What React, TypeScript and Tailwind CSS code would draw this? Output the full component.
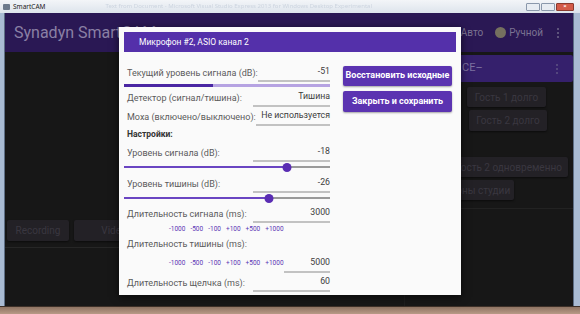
import React from 'react';

const adjust = ['-1000', '-500', '-100', '+100', '+500', '+1000'];

function DimButton({ children, className = '' }: { children: React.ReactNode; className?: string }) {
  return (
    <div
      className={`flex items-center justify-center whitespace-nowrap rounded-[2px] bg-[#232126] text-[10px] text-[#3a3740] shadow-[0_1px_2px_rgba(0,0,0,0.5)] ${className}`}
    >
      {children}
    </div>
  );
}

function Field({ label, value, className = '' }: { label: string; value: string; className?: string }) {
  return (
    <div className={`flex h-[18px] items-center justify-between whitespace-nowrap ${className}`}>
      <span className="pl-[3px] pt-[2px] text-[9px] text-[#5a5a5a]">{label}</span>
      <div className="flex h-full w-[77px] items-center justify-end border-b-2 border-[#c2c2c2] text-[8.75px] text-[#3c3c3c]">
        {value}
      </div>
    </div>
  );
}

function Slider({ pos }: { pos: number }) {
  return (
    <div className="relative flex h-[10px] items-center">
      <div className="h-[2px] bg-[#6a45c2]" style={{ width: pos }} />
      <div className="h-[2px] flex-1 bg-[#9a9a9a]" />
      <div
        className="absolute top-[0.5px] h-[9px] w-[9px] -translate-x-1/2 rounded-full bg-[#5a2db3]"
        style={{ left: pos }}
      />
    </div>
  );
}

function Adjust() {
  return (
    <div className="ml-[45px] flex gap-[5px] whitespace-nowrap text-[6.5px] text-[#5b35b5]">
      {adjust.map((a) => (
        <span key={a}>{a}</span>
      ))}
    </div>
  );
}

function Kebab({ color }: { color: string }) {
  return (
    <div className="flex flex-col gap-[2px]">
      <div className={`h-[2px] w-[2px] rounded-full ${color}`} />
      <div className={`h-[2px] w-[2px] rounded-full ${color}`} />
      <div className={`h-[2px] w-[2px] rounded-full ${color}`} />
    </div>
  );
}

export default function App() {
  return (
    <div className="relative h-[314px] w-[580px] overflow-hidden bg-[#a9bbd3] font-[Roboto,sans-serif]">
      {/* window title bar */}
      <div className="flex h-[13px] items-center bg-gradient-to-b from-[#f3f5f8] to-[#dde4ec] pl-[3px] pr-[6px] font-['Noto_Sans',sans-serif]">
        <div className="h-[6px] w-[7px] rounded-[1px] bg-[#6c7a8c]" />
        <span className="ml-[3px] text-[6.5px] text-[#1a1a1a]">SmartCAM</span>
        <span className="ml-[60px] whitespace-nowrap text-[6px] text-[#ccd4df] blur-[0.7px]">
          Text from Document - Microsoft Visual Studio Express 2013 for Windows Desktop Experimental
        </span>
        <div className="ml-auto flex items-center gap-[1px]">
          <div className="h-[8px] w-[14px] rounded-[1px] border border-[#8a98ab] bg-[#e7ecf2]" />
          <div className="h-[8px] w-[14px] rounded-[1px] border border-[#8a98ab] bg-[#e7ecf2]" />
          <div className="flex h-[8px] w-[18px] items-center justify-center rounded-[1px] border border-[#8a3a2e] bg-[#d35b48] text-[6px] font-bold text-white">
            ×
          </div>
        </div>
      </div>

      {/* application area */}
      <div className="ml-[4px] mr-[6px] flex h-[293px] flex-col border-x border-[#5d6e85] bg-[#171717]">
        <header className="flex h-[39px] items-center bg-[#2a1854] pl-[9px] pr-[14px]">
          <span className="text-[16px] text-[#8a80a5]">Synadyn SmartCAM</span>
          <div className="ml-auto flex items-center text-[10px] text-[#7b7392]">
            <span>Авто</span>
            <div className="ml-[12px] h-[11px] w-[11px] rounded-full bg-[#75705f]" />
            <span className="ml-[3px]">Ручной</span>
            <div className="ml-[14px]">
              <Kebab color="bg-[#6f6788]" />
            </div>
          </div>
        </header>

        <div className="flex flex-1">
          {/* left column */}
          <div className="flex flex-1 flex-col">
            <div className="mt-[168px] flex gap-[5px] pl-[2px]">
              <DimButton className="h-[21px] w-[62px]">Recording</DimButton>
              <DimButton className="h-[21px] w-[80px]">Video</DimButton>
            </div>
            <div className="mt-[6px] h-[1px] bg-[#262626]" />
          </div>

          {/* right column */}
          <div className="flex w-[169px] flex-col border-l border-[#1e1e1e]">
            <div className="mt-[3px] flex h-[27px] items-center rounded-[2px] bg-[#35206c] pl-[57px] pr-[15px] text-[11px] text-[#7d72a0]">
              <span>CE–</span>
              <div className="ml-auto">
                <Kebab color="bg-[#5f5385]" />
              </div>
            </div>
            <DimButton className="ml-[62px] mt-[5px] h-[20px] w-[79px]">Гость 1 долго</DimButton>
            <DimButton className="ml-[64px] mt-[3px] h-[21px] w-[78px]">Гость 2 долго</DimButton>
            <DimButton className="ml-[45px] mt-[26px] h-[20px] w-[118px] text-[9px]">Гость 2 одновременно</DimButton>
            <DimButton className="ml-[9px] mt-[3px] h-[20px] w-[100px]">Микрофоны студии</DimButton>
            <div className="mt-[8px] h-[1px] bg-[#222]" />
          </div>
        </div>
      </div>

      {/* bottom frame */}
      <div className="h-[8px] border-t border-[#3d3028] bg-gradient-to-b from-[#8f7463] to-[#b89a86]" />

      {/* modal dialog */}
      <div className="absolute left-[119px] top-[27px] flex h-[268px] w-[342px] flex-col bg-[#fafafa] shadow-[0_2px_8px_rgba(0,0,0,0.6)]">
        <div className="mx-[5px] mt-[5px] flex h-[20px] items-center bg-[#5430aa] pl-[15px] text-[8.5px] text-white">
          Микрофон #2, ASIO канал 2
        </div>
        <div className="flex pl-[5px]">
          <div className="flex w-[206px] flex-col">
            <Field className="mt-[12px]" label="Текущий уровень сигнала (dB):" value="-51" />
            <div className="mt-[2px] flex h-[3px]">
              <div className="w-[89px] bg-[#4a27a3]" />
              <div className="flex-1 bg-[#b6a3e2]" />
            </div>
            <Field className="mt-[2px]" label="Детектор (сигнал/тишина):" value="Тишина" />
            <Field className="mt-[1px]" label="Моха (включено/выключено):" value="Не используется" />
            <div className="mt-[2px] flex h-[12px] items-center pl-[3px] text-[8.5px] font-bold text-[#333]">
              Настройки:
            </div>
            <Field className="mt-[4px]" label="Уровень сигнала (dB):" value="-18" />
            <Slider pos={163} />
            <Field className="mt-[3px]" label="Уровень тишины (dB):" value="-26" />
            <Slider pos={145} />
            <Field className="mt-[2px]" label="Длительность сигнала (ms):" value="3000" />
            <div className="mt-[2px] flex h-[10px] items-center">
              <Adjust />
            </div>
            <div className="mt-[3px] flex h-[14px] items-center pl-[3px] text-[9px] text-[#5a5a5a]">
              Длительность тишины (ms):
            </div>
            <div className="mt-[3px] flex h-[18px] items-center justify-between">
              <Adjust />
              <div className="flex h-full w-[77px] items-center justify-end border-b-2 border-[#c2c2c2] text-[8.75px] text-[#3c3c3c]">
                5000
              </div>
            </div>
            <Field className="mt-[1px]" label="Длительность щелчка (ms):" value="60" />
          </div>

          <div className="ml-[13px] flex w-[109px] flex-col">
            <button
              type="button"
              className="mt-[14px] h-[20px] whitespace-nowrap rounded-[2px] bg-[#5b33b1] text-[9px] font-bold text-white shadow-[0_1px_2px_rgba(0,0,0,0.35)]"
            >
              Восстановить исходные
            </button>
            <button
              type="button"
              className="mt-[5px] h-[21px] whitespace-nowrap rounded-[2px] bg-[#5b33b1] text-[9px] font-bold text-white shadow-[0_1px_2px_rgba(0,0,0,0.35)]"
            >
              Закрыть и сохранить
            </button>
          </div>
        </div>
      </div>
    </div>
  );
}
